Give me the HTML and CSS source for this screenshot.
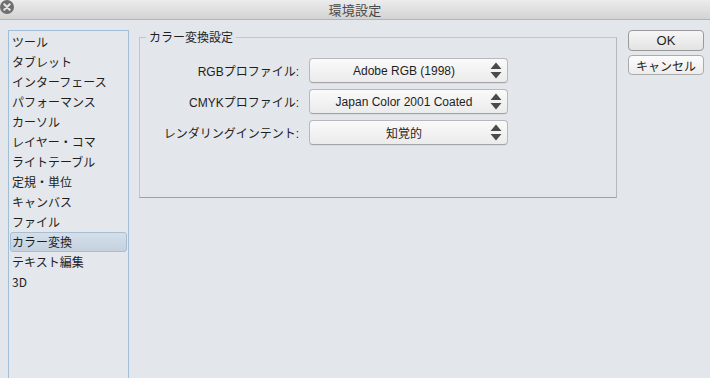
FILE: index.html
```html
<!DOCTYPE html>
<html lang="ja">
<head>
<meta charset="utf-8">
<title>環境設定</title>
<link rel="stylesheet" href="styles.css">
</head>
<body>
<div class="window">
  <div class="titlebar">
    <span class="close"><svg width="14" height="14" viewBox="0 0 14 14"><circle cx="7" cy="7" r="7" fill="#6f6f6f"/><path d="M4.3 4.3 L9.7 9.7 M9.7 4.3 L4.3 9.7" stroke="#e4e4e4" stroke-width="2.2" stroke-linecap="round"/></svg></span>
    <span class="title">環境設定</span>
  </div>
  <div class="main">
    <ul class="sidebar">
      <li>ツール</li>
      <li>タブレット</li>
      <li>インターフェース</li>
      <li>パフォーマンス</li>
      <li>カーソル</li>
      <li>レイヤー・コマ</li>
      <li>ライトテーブル</li>
      <li>定規・単位</li>
      <li>キャンバス</li>
      <li>ファイル</li>
      <li class="selected">カラー変換</li>
      <li>テキスト編集</li>
      <li>3D</li>
    </ul>
    <fieldset class="group">
      <legend>カラー変換設定</legend>
      <div class="rows">
        <div class="row"><span class="label">RGBプロファイル:</span><div class="select"><span class="value">Adobe RGB (1998)</span><span class="arrows"><svg width="12" height="17" viewBox="0 0 12 17"><path d="M6 0.5 L11.5 7 H0.5 Z M0.5 10 H11.5 L6 16.5 Z" fill="#4a4a4a"/></svg></span></div></div>
        <div class="row"><span class="label">CMYKプロファイル:</span><div class="select"><span class="value">Japan Color 2001 Coated</span><span class="arrows"><svg width="12" height="17" viewBox="0 0 12 17"><path d="M6 0.5 L11.5 7 H0.5 Z M0.5 10 H11.5 L6 16.5 Z" fill="#4a4a4a"/></svg></span></div></div>
        <div class="row"><span class="label">レンダリングインテント:</span><div class="select"><span class="value">知覚的</span><span class="arrows"><svg width="12" height="17" viewBox="0 0 12 17"><path d="M6 0.5 L11.5 7 H0.5 Z M0.5 10 H11.5 L6 16.5 Z" fill="#4a4a4a"/></svg></span></div></div>
      </div>
    </fieldset>
    <div class="buttons">
      <button class="btn default">OK</button>
      <button class="btn">キャンセル</button>
    </div>
  </div>
</div>
</body>
</html>
```
FILE: styles.css
```css
html, body {
  margin: 0;
  padding: 0;
  height: 100%;
  overflow: hidden;
}
body {
  background: #e3e6ea;
  font-family: "Noto Sans CJK JP", "Liberation Sans", sans-serif;
  font-size: 12px;
  color: #1e1e1e;
}
.window {
  display: flex;
  flex-direction: column;
  height: 378px;
}
.titlebar {
  height: 19px;
  flex: none;
  background: linear-gradient(#ececec, #d3d3d3);
  border-bottom: 1px solid #b4b4b4;
  display: flex;
  align-items: center;
  justify-content: center;
  position: relative;
}
.close {
  position: absolute;
  left: 0;
  top: 0;
  width: 14px;
  height: 14px;
  display: flex;
}
.title {
  font-size: 13px;
  color: #4a4a4a;
  line-height: 19px;
  letter-spacing: 0.3px;
}
.main {
  flex: 1;
  display: flex;
  align-items: flex-start;
  padding: 10px 6px 0 8px;
  min-height: 0;
}
.sidebar {
  list-style: none;
  margin: 0;
  padding: 1px 1px 0 1px;
  width: 117px;
  height: 348px;
  border: 1px solid #9fbfd9;
  border-bottom: none;
  background: #e4e7eb;
  flex: none;
}
.sidebar li {
  height: 20px;
  line-height: 20px;
  padding-left: 2px;
  box-sizing: border-box;
  font-size: 12px;
  color: #1e1e1e;
  white-space: nowrap;
}
.sidebar li.selected {
  background: linear-gradient(#d5dfe9, #c4d2df);
  border: 1px solid #a9bdd0;
  border-radius: 3px;
  line-height: 18px;
  padding-left: 1px;
}
.group {
  margin: 0 0 0 10px;
  padding: 0;
  width: 478px;
  height: 168px;
  box-sizing: border-box;
  border: 1px solid #c2c5c9;
  border-bottom-color: #9da1a6;
  border-right-color: #b4b7bb;
  min-width: 0;
  flex: none;
}
.group legend {
  margin-left: 6px;
  padding: 0 3px;
  font-size: 12px;
  color: #1e1e1e;
  line-height: 14px;
}
.rows {
  display: flex;
  flex-direction: column;
  gap: 6px;
  padding-top: 14px;
}
.row {
  display: flex;
  align-items: center;
}
.label {
  width: 159px;
  text-align: right;
  font-family: "Liberation Sans", "Noto Sans CJK JP", sans-serif;
  font-size: 12px;
  color: #1e1e1e;
}
.select {
  margin-left: 10px;
  width: 197px;
  height: 23px;
  border: 1px solid #b6b8bb;
  border-bottom-color: #a2a4a7;
  border-radius: 4px;
  background: linear-gradient(#fafafa, #ebebeb);
  display: flex;
  align-items: center;
  box-shadow: 0 1px 0 rgba(0,0,0,0.04);
}
.value {
  flex: 1;
  text-align: center;
  font-family: "Liberation Sans", "Noto Sans CJK JP", sans-serif;
  font-size: 12px;
  color: #1e1e1e;
  padding-left: 8px;
}
.arrows {
  width: 12px;
  height: 17px;
  margin-right: 5px;
  display: flex;
}
.buttons {
  margin-left: 11px;
  margin-top: 0;
  display: flex;
  flex-direction: column;
  gap: 4px;
  flex: none;
}
.btn {
  width: 76px;
  height: 20px;
  margin: 0;
  padding: 0;
  border: 1px solid #ababab;
  border-radius: 4px;
  background: linear-gradient(#fcfcfc, #ececec);
  font-family: "Liberation Sans", "Noto Sans CJK JP", sans-serif;
  font-size: 12px;
  color: #1e1e1e;
}
.btn.default {
  font-size: 13px;
  height: 21px;
  border-color: #9a9a9a;
  background: linear-gradient(#f6f6f6, #e3e3e3);
}
```
